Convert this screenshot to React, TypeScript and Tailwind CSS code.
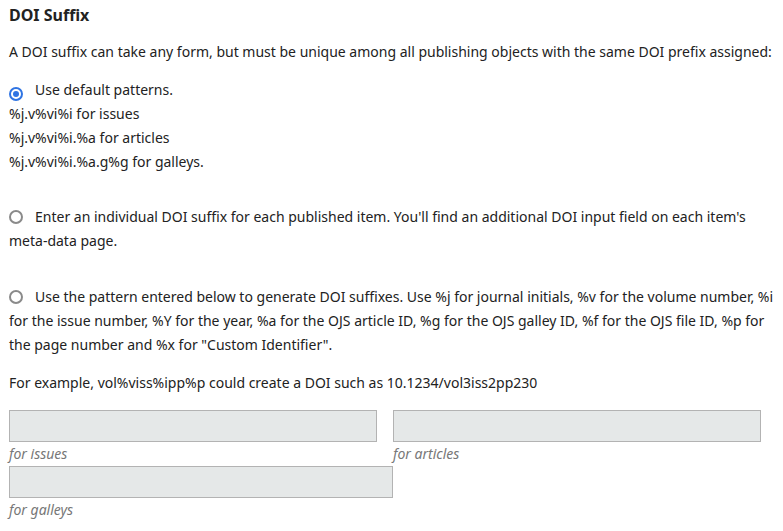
function Radio({ checked }: { checked?: boolean }) {
  return checked ? (
    <span className="mr-3 inline-flex h-[14px] w-[14px] shrink-0 items-center justify-center rounded-full border-2 border-[#2f74e3] align-[-2px]">
      <span className="h-[6px] w-[6px] rounded-full bg-[#2f74e3]" />
    </span>
  ) : (
    <span className="mr-3 inline-block h-[14px] w-[14px] shrink-0 rounded-full border-2 border-[#8a8a8a] align-[-2px]" />
  );
}

function Field({ label, width }: { label: string; width: string }) {
  return (
    <div>
      <div className={`h-[32px] border border-[#b3b3b3] bg-[#e5e8e8] ${width}`} />
      <div className="h-[24px] text-[14px] leading-[24px] italic text-[#777]">{label}</div>
    </div>
  );
}

export default function App() {
  return (
    <div className="bg-white px-[9px] pt-[3px] text-[14px] leading-[24px] text-[#222]" style={{ fontFamily: '"Noto Sans", sans-serif' }}>
      <h2 className="text-[16px] font-bold leading-[24px]">DOI Suffix</h2>

      <p className="mt-[13px]">
        A DOI suffix can take any form, but must be unique among all publishing objects with the same DOI prefix assigned:
      </p>

      <div className="mt-[14px]">
        <Radio checked />
        Use default patterns.
      </div>
      <div className="text-[14px]">
        <div>%j.v%vi%i for issues</div>
        <div>%j.v%vi%i.%a for articles</div>
        <div>%j.v%vi%i.%a.g%g for galleys.</div>
      </div>

      <div className="mt-[31px]">
        <Radio />
        Enter an individual DOI suffix for each published item. You'll find an additional DOI input field on each item's meta-data page.
      </div>

      <div className="mt-[32px]">
        <Radio />
        Use the pattern entered below to generate DOI suffixes. Use %j for journal initials, %v for the volume number, %i for the issue number, %Y for the year, %a for the OJS article ID, %g for the OJS galley ID, %f for the OJS file ID, %p for the page number and %x for "Custom Identifier".
      </div>

      <p className="mt-[14px]">For example, vol%viss%ipp%p could create a DOI such as 10.1234/vol3iss2pp230</p>

      <div className="mt-[15px] flex gap-[16px]">
        <Field label="for issues" width="w-[368px]" />
        <Field label="for articles" width="w-[368px]" />
      </div>
      <Field label="for galleys" width="w-[384px]" />
    </div>
  );
}
